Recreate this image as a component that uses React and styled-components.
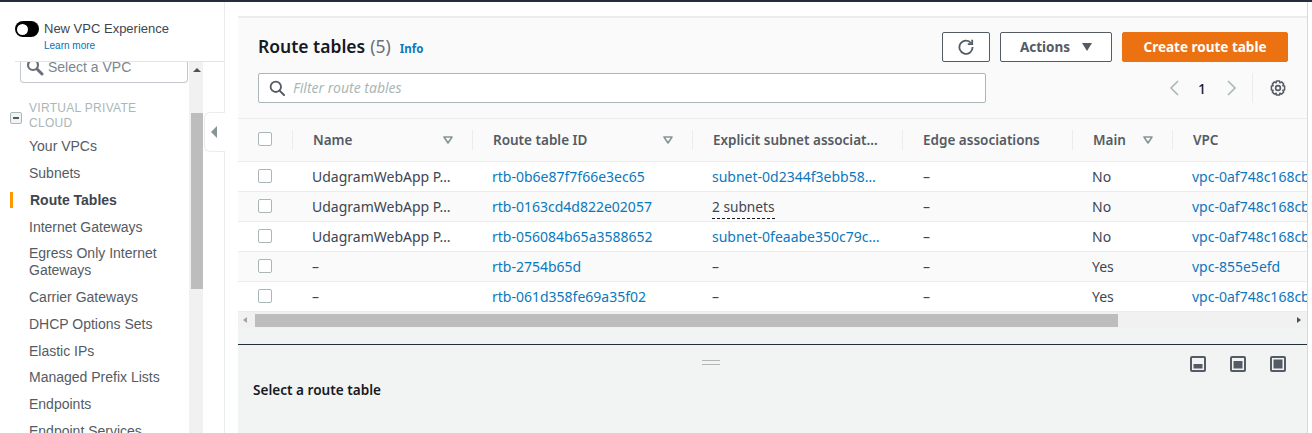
import React from 'react';
import styled, { createGlobalStyle } from 'styled-components';

const Global = createGlobalStyle`
  html, body { margin: 0; padding: 0; height: 433px; overflow: hidden; background: #fff; }
  * { box-sizing: border-box; }
`;
const EMBER = `"Noto Sans", "Open Sans", sans-serif`;
const ARIAL = `"Liberation Sans", Arial, sans-serif`;

const Page = styled.div`display: flex; flex-direction: column; width: 1312px; height: 433px; overflow: hidden;`;
const TopBar = styled.div`height: 2px; background: #232f3e; flex: none;`;
const Body = styled.div`display: flex; flex: 1; min-height: 0;`;

const Sidebar = styled.aside`width: 225px; flex: none; display: flex; flex-direction: column; border-right: 1px solid #eaeded; font-family: ${ARIAL}; position: relative;`;
const Experience = styled.div`height: 60px; flex: none; margin-left: 15px; border-bottom: 1px solid #e4e4e4; display: flex; flex-direction: column; padding-top: 18px;`;
const ToggleRow = styled.div`display: flex; align-items: center; gap: 5px; font-size: 13px; line-height: 18px; color: #3d4650;`;
const Toggle = styled.span`width: 24px; height: 16px; border-radius: 8px; background: #000; display: flex; align-items: center; padding-left: 2px;`;
const Knob = styled.span`width: 11px; height: 11px; border-radius: 50%; background: #fff;`;
const LearnMore = styled.a`font-size: 10px; line-height: 13px; color: #0073bb; margin: 1px 0 0 29px;`;
const SideBody = styled.div`flex: 1; min-height: 0; display: flex; overflow: hidden;`;
const NavCol = styled.div`width: 189px; flex: none; display: flex; flex-direction: column;`;
const SelectBox = styled.div`margin-left: 20px; width: 168px; height: 21px; flex: none; border: 1px solid #c4c8cc; border-top: 0; border-radius: 0 0 4px 4px; display: flex; align-items: flex-start; gap: 4px; padding: 0 0 0 5px; font-size: 14px; line-height: 11px; color: #7b8590;`;
const Group = styled.div`display: flex; margin-top: 18px; padding-left: 10px; gap: 7px;`;
const Minus = styled.span`width: 12px; height: 12px; margin-top: 11px; flex: none; border: 1px solid #aab7b8; border-radius: 2px; background: #f2f3f3; display: flex; align-items: center; justify-content: center;
  &::after { content: ''; width: 6px; height: 2px; background: #545b64; }`;
const GroupTitle = styled.div`font-size: 12px; line-height: 15px; letter-spacing: 0.3px; color: #aab7b8; width: 130px;`;
const NavList = styled.ul`list-style: none; margin: 7.4px 0 0; padding: 0;`;
const NavItem = styled.li`position: relative; padding-left: ${p => (p.$active ? 30 : 29)}px; font-size: 14px; line-height: 17px; margin-bottom: 9.75px; color: ${p => (p.$active ? '#3d4650' : '#545b64')}; font-weight: ${p => (p.$active ? 700 : 400)};
  ${p => p.$active && `&::before { content: ''; position: absolute; left: 10px; top: 0; width: 3px; height: 16px; background: #ff9900; }`}`;
const VScroll = styled.div`width: 14px; flex: none; background: #f1f1f1; display: flex; flex-direction: column; align-items: center; padding-left: 2px;`;
const VArrow = styled.span`width: 0; height: 0; margin-top: 6px; border-left: 4px solid transparent; border-right: 4px solid transparent; border-bottom: 4px solid #505050;`;
const VThumb = styled.div`width: 12px; height: 176px; margin-top: 41px; background: #bdbdbd;`;
const Collapse = styled.button`position: absolute; left: 204px; top: 110px; width: 21px; height: 40px; padding: 0; background: #fff; border: 1px solid #eaeded; border-right: 0; border-radius: 6px 0 0 6px; display: flex; align-items: center; justify-content: center;
  &::after { content: ''; border-top: 6px solid transparent; border-bottom: 6px solid transparent; border-right: 6px solid #879596; margin-right: 2px; }`;

const Main = styled.main`width: 1070px; margin-left: 13px; flex: none; display: flex; flex-direction: column; padding-top: 14px; border-right: 1px solid #d5dbdb; font-family: ${EMBER};`;
const TablePanel = styled.section`background: #fafafa; border-top: 2px solid #eaeded; padding-top: 14px; flex: none; overflow: hidden;`;
const TitleRow = styled.div`display: flex; align-items: center; height: 30px; padding: 0 19px 0 20px;`;
const Title = styled.h1`margin: 0 0 1px; font-size: 17.5px; font-weight: 600; line-height: 29px; color: #16191f;`;
const Count = styled.span`font-weight: 400; color: #687078; margin-left: 5px;`;
const Info = styled.a`font-size: 11.5px; font-weight: 700; color: #0a78bd; margin-left: 9px; padding-top: 3px;`;
const Spacer = styled.div`flex: 1;`;
const Button = styled.button`height: 30px; width: ${p => p.$w}px; margin-left: ${p => p.$ml || 0}px; border-radius: 2px; border: 1px solid ${p => (p.$primary ? '#ec7211' : '#545b64')}; background: ${p => (p.$primary ? '#ec7211' : '#fff')}; color: ${p => (p.$primary ? '#fff' : '#545b64')}; font-family: ${EMBER}; font-size: 13.5px; font-weight: 700; display: flex; align-items: center; justify-content: center; gap: 12px; padding: 0;`;
const FilterRow = styled.div`display: flex; align-items: center; height: 30px; margin-top: 11px; padding: 0 19px 0 20px;`;
const Filter = styled.div`width: 728px; height: 30px; background: #fff; border: 1px solid #aab7b8; border-radius: 2px; display: flex; align-items: center; gap: 8px; padding: 0 0 1px 10px; font-size: 14px; font-style: italic; color: #aab7b8;`;
const Pager = styled.div`margin-left: auto; margin-right: 2px; display: flex; align-items: center; height: 30px;`;
const PageNum = styled.span`font-size: 14px; font-weight: 500; color: #16191f; width: 46px; margin-right: 2px; text-align: center;`;
const PagerDivider = styled.span`width: 1px; height: 30px; background: #eaeded; margin: 0 17px 0 15px;`;

const Table = styled.div`margin-top: 15px; border-top: 1px solid #eaeded; overflow: hidden; width: 100%;`;
const columns = '55px 180px 220px 210px 170px 100px 134px';
const HeadRow = styled.div`display: grid; grid-template-columns: ${columns}; height: 43px; align-items: center; border-bottom: 1px solid #eaeded;`;
const HeadCell = styled.div`height: 20px; border-left: ${p => (p.$first ? 0 : '1px solid #eaeded')}; margin-left: ${p => (p.$first ? 0 : -1)}px; padding: 0 20px; display: flex; align-items: center; justify-content: space-between; font-size: 13.5px; font-weight: 600; color: #545b64; white-space: nowrap;`;
const Row = styled.div`display: grid; grid-template-columns: ${columns}; height: 30px; align-items: center; background: ${p => (p.$alt ? '#fafafa' : '#fff')}; border-bottom: 1px solid #eaeded;`;
const Cell = styled.div`padding-left: ${p => p.$pl ?? 19}px; height: 26px; line-height: 26px; font-size: 14px; color: #3d4650; white-space: nowrap; overflow: hidden;`;
const LinkCell = styled(Cell)`color: #0a78bd;`;
const Dashed = styled.span`display: inline-block; line-height: 18px; font-size: 13.7px; color: #3d4650; border-bottom: 1px dashed #16191f; padding-bottom: 2px;`;
const CheckCell = styled.div`padding-left: 20px;`;
const Check = styled.span`display: block; width: 14px; height: 14px; margin-top: -2px; border: 1px solid #aab7b8; border-radius: 2px; background: #fff;`;

const HScroll = styled.div`height: 16px; background: #f1f1f1; display: flex; align-items: center; position: relative;`;
const HArrowL = styled.span`width: 0; height: 0; margin-left: 5px; border-top: 3.5px solid transparent; border-bottom: 3.5px solid transparent; border-right: 4px solid #a3a3a3;`;
const HThumb = styled.div`width: 863px; height: 13px; margin-left: 8px; background: #bdbdbd;`;
const HArrowR = styled.span`width: 0; height: 0; margin-left: auto; margin-right: 6px; border-top: 3.5px solid transparent; border-bottom: 3.5px solid transparent; border-left: 4px solid #505050;`;

const Lower = styled.section`flex: 1; min-height: 0; background: #f2f3f3;`;
const Gap = styled.div`height: 17px; background: #f2f3f3; border-bottom: 1px solid #232f3e; flex: none;`;
const SplitTools = styled.div`display: flex; align-items: flex-start; height: 30px; padding: 11px 0 0; position: relative;`;
const Grip = styled.span`position: absolute; left: 464px; top: 15px; width: 18px; height: 5px; border-top: 1px solid #b5b5b5; border-bottom: 1px solid #b5b5b5;`;
const ToolIcons = styled.div`margin-left: auto; margin-right: 21px; display: flex; gap: 24px;`;
const LowerTitle = styled.div`font-size: 13.6px; font-weight: 600; color: #16191f; padding: 6px 0 0 15px; line-height: 18px;`;

const Sort = () => (
  <svg width="10" height="8" viewBox="0 0 10 8"><path d="M1 1h8L5 7z" fill="none" stroke="#879596" strokeWidth="1.6" strokeLinejoin="round" /></svg>
);
const SearchThick = () => (
  <svg width="18" height="18" viewBox="0 0 18 18" style={{ flex: 'none', marginTop: '-3px' }}><circle cx="7" cy="6" r="5" fill="none" stroke="#687078" strokeWidth="2.2" /><path d="M11 10l5 5" stroke="#687078" strokeWidth="3" strokeLinecap="round" /></svg>
);
const SearchIcon = () => (
  <svg width="16" height="16" viewBox="0 0 16 16" style={{ flex: 'none' }}><circle cx="6.8" cy="6.8" r="5.2" fill="none" stroke="#545b64" strokeWidth="1.8" /><path d="M10.6 10.6L15 15" stroke="#545b64" strokeWidth="2" strokeLinecap="round" /></svg>
);
const Refresh = () => (
  <svg width="16" height="16" viewBox="0 0 16 16"><path d="M13.2 4.2A6.6 6.6 0 1 0 14.6 8" fill="none" stroke="#545b64" strokeWidth="1.8" /><path d="M14.2 0.8v4.4H9.8" fill="none" stroke="#545b64" strokeWidth="1.8" /></svg>
);
const Caret = () => (
  <svg width="10" height="8" viewBox="0 0 10 8"><path d="M0 0h10L5 8z" fill="#545b64" /></svg>
);
const ChevL = () => (
  <svg width="10" height="16" viewBox="0 0 10 16"><path d="M9 1L2 8l7 7" fill="none" stroke="#aab7b8" strokeWidth="1.6" /></svg>
);
const ChevR = () => (
  <svg width="10" height="16" viewBox="0 0 10 16"><path d="M1 1l7 7-7 7" fill="none" stroke="#aab7b8" strokeWidth="1.6" /></svg>
);
const Gear = () => (
  <svg width="16" height="16" viewBox="0 0 16 16"><circle cx="8" cy="8" r="2.4" fill="none" stroke="#545b64" strokeWidth="1.6" /><path d="M6.5.9h3l.4 1.9 1.7-.9 2.1 2.1-.9 1.7 1.8.4v3.8l-1.8.4.9 1.7-2.1 2.1-1.7-.9-.4 1.9h-3l-.4-1.9-1.7.9-2.1-2.1.9-1.7-1.8-.4V6.1l1.8-.4-.9-1.7 2.1-2.1 1.7.9z" fill="none" stroke="#545b64" strokeWidth="1.5" strokeLinejoin="round" /></svg>
);
const PaneIcon = ({ top }) => (
  <svg width="16" height="16" viewBox="0 0 16 16">
    <rect x="1" y="1" width="14" height="14" rx="1" fill="#f2f3f3" stroke="#545b64" strokeWidth="2" />
    <rect x="3.5" y={top} width="9" height={12.5 - top} fill="#545b64" />
  </svg>
);

const nav = ['Your VPCs', 'Subnets', 'Route Tables', 'Internet Gateways', 'Egress Only Internet Gateways', 'Carrier Gateways', 'DHCP Options Sets', 'Elastic IPs', 'Managed Prefix Lists', 'Endpoints', 'Endpoint Services'];
const vpc = 'vpc-0af748c168cb';
const rows = [
  ['UdagramWebApp P…', 'rtb-0b6e87f7f66e3ec65', 'subnet-0d2344f3ebb58…', 'No', vpc],
  ['UdagramWebApp P…', 'rtb-0163cd4d822e02057', null, 'No', vpc],
  ['UdagramWebApp P…', 'rtb-056084b65a3588652', 'subnet-0feaabe350c79c…', 'No', vpc],
  ['–', 'rtb-2754b65d', '–', 'Yes', 'vpc-855e5efd'],
  ['–', 'rtb-061d358fe69a35f02', '–', 'Yes', vpc],
];

export default function App() {
  return (
    <Page>
      <Global />
      <TopBar />
      <Body>
        <Sidebar>
          <Experience>
            <ToggleRow><Toggle><Knob /></Toggle>New VPC Experience</ToggleRow>
            <LearnMore>Learn more</LearnMore>
          </Experience>
          <SideBody>
            <NavCol>
              <SelectBox><SearchThick />Select a VPC</SelectBox>
              <Group>
                <Minus />
                <GroupTitle>VIRTUAL PRIVATE CLOUD</GroupTitle>
              </Group>
              <NavList>
                {nav.map(n => <NavItem key={n} $active={n === 'Route Tables'}>{n}</NavItem>)}
              </NavList>
            </NavCol>
            <VScroll><VArrow /><VThumb /></VScroll>
          </SideBody>
          <Collapse aria-label="Collapse" />
        </Sidebar>
        <Main>
          <TablePanel>
            <TitleRow>
              <Title>Route tables<Count>(5)</Count></Title>
              <Info>Info</Info>
              <Spacer />
              <Button $w={48}><Refresh /></Button>
              <Button $w={112} $ml={10}>Actions<Caret /></Button>
              <Button $w={166} $ml={10} $primary>Create route table</Button>
            </TitleRow>
            <FilterRow>
              <Filter><SearchIcon />Filter route tables</Filter>
              <Pager>
                <ChevL /><PageNum>1</PageNum><ChevR />
                <PagerDivider /><Gear />
              </Pager>
            </FilterRow>
            <Table>
              <HeadRow>
                <HeadCell $first><Check /></HeadCell>
                <HeadCell>Name<Sort /></HeadCell>
                <HeadCell>Route table ID<Sort /></HeadCell>
                <HeadCell>Explicit subnet associat…</HeadCell>
                <HeadCell>Edge associations</HeadCell>
                <HeadCell>Main<Sort /></HeadCell>
                <HeadCell>VPC</HeadCell>
              </HeadRow>
              {rows.map((r, i) => (
                <Row key={r[1]} $alt={i % 2 === 1}>
                  <CheckCell><Check /></CheckCell>
                  <Cell>{r[0]}</Cell>
                  <LinkCell>{r[1]}</LinkCell>
                  {r[2] === null ? <Cell><Dashed>2 subnets</Dashed></Cell> : r[2] === '–' ? <Cell>–</Cell> : <LinkCell>{r[2]}</LinkCell>}
                  <Cell $pl={20}>–</Cell>
                  <Cell>{r[3]}</Cell>
                  <LinkCell>{r[4]}</LinkCell>
                </Row>
              ))}
            </Table>
            <HScroll><HArrowL /><HThumb /><HArrowR /></HScroll>
          </TablePanel>
          <Gap />
          <Lower>
            <SplitTools>
              <Grip />
              <ToolIcons>
                <PaneIcon top={8} />
                <PaneIcon top={5} />
                <PaneIcon top={3.5} />
              </ToolIcons>
            </SplitTools>
            <LowerTitle>Select a route table</LowerTitle>
          </Lower>
        </Main>
      </Body>
    </Page>
  );
}
